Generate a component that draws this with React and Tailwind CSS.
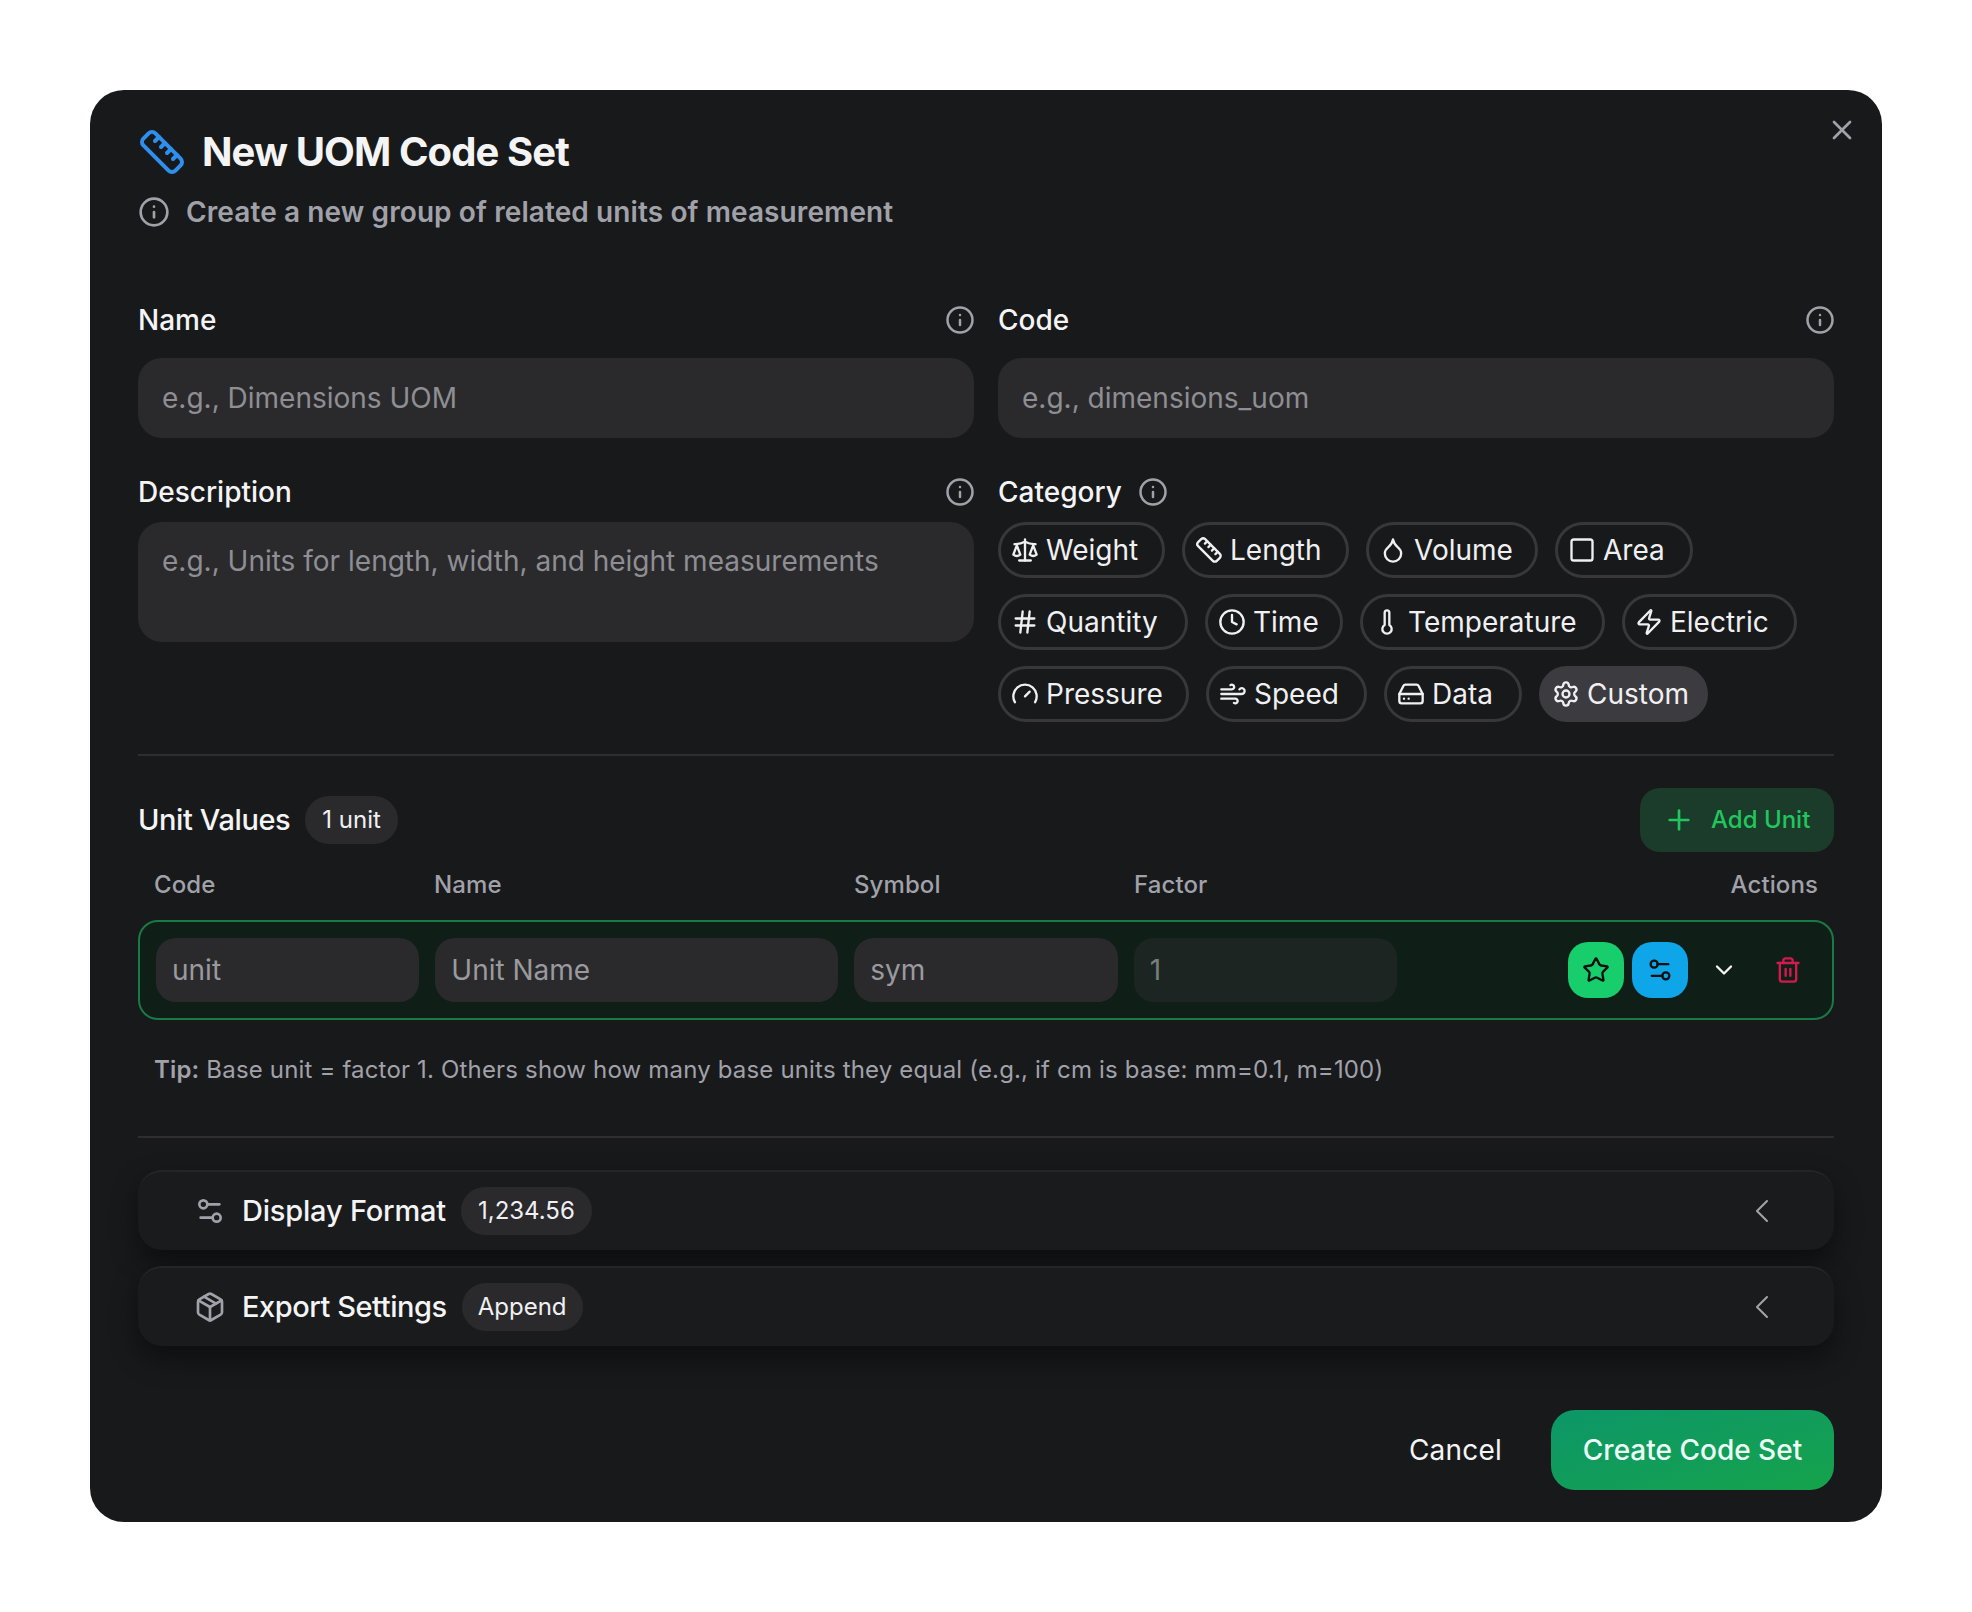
import React from "react";
import { Ruler, Info, X, Scale, Droplet, Square, Hash, Clock, Thermometer, Zap, Gauge, Wind, HardDrive, Settings, Plus, Star, Settings2, ChevronDown, Trash2, Package, ChevronLeft } from "lucide-react";

const rows = [
  [["Weight", Scale, "w-[167px]"], ["Length", Ruler, "w-[167px]"], ["Volume", Droplet, "w-[172px]"], ["Area", Square, "w-[138px]"]],
  [["Quantity", Hash, "w-[190px]"], ["Time", Clock, "w-[138px]"], ["Temperature", Thermometer, "w-[245px]"], ["Electric", Zap, "w-[175px]"]],
  [["Pressure", Gauge, "w-[191px]"], ["Speed", Wind, "w-[161px]"], ["Data", HardDrive, "w-[138px]"], ["Custom", Settings, "w-[169px]", true]],
];

function Chip({ label, Icon, width, active }) {
  return (
    <button className={`flex h-14 items-center gap-[7px] rounded-full border-[3px] pl-[10px] text-[28px] text-[#f0f0f2] ${width} ${active ? "border-[#3c3c40] bg-[#3c3c40]" : "border-[#38383b]"}`}>
      <Icon size={28} strokeWidth={2} />
      <span>{label}</span>
    </button>
  );
}

function Label({ children, spread = true }) {
  return (
    <div className={`flex h-[32px] items-center ${spread ? "justify-between" : "gap-[16px]"}`}>
      <span className="text-[28px] font-[550] text-[#f4f4f5]">{children}</span>
      <Info size={30} strokeWidth={2} className="-mr-px text-[#a1a1aa]" />
    </div>
  );
}

function Field({ placeholder, className = "" }) {
  return (
    <input placeholder={placeholder} className={`h-20 w-full rounded-[24px] bg-[#2a2a2d] px-6 text-[28px] placeholder:text-[#8e8e93] ${className}`} />
  );
}

function RowInput({ placeholder, span, dim }) {
  return (
    <input placeholder={placeholder} className={`h-16 w-full min-w-0 rounded-[20px] px-4 text-[28px] ${span} ${dim ? "bg-[#1c2522] placeholder:text-[#76807b]" : "bg-[#2a2a2d] placeholder:text-[#9a9a9e]"}`} />
  );
}

function Accordion({ Icon, title, badge, titleClass, badgeClass }) {
  return (
    <div className="flex h-20 items-center rounded-[24px] border-t-2 border-[#252527] bg-[#1a1b1d] pl-[56px] pr-[52px] shadow-[0_12px_28px_rgba(0,0,0,0.45)]">
      <Icon size={32} strokeWidth={2} className="text-[#a1a1aa]" />
      <span className={`ml-[16px] text-[29px] font-medium text-[#f4f4f5] ${titleClass}`}>{title}</span>
      <span className={`ml-[15px] flex h-12 items-center rounded-full bg-[#2a2a2d] text-[24px] text-[#f0f0f2] ${badgeClass}`}>{badge}</span>
      <ChevronLeft size={40} strokeWidth={1.25} className="ml-auto text-[#a1a1aa]" />
    </div>
  );
}

export default function App() {
  return (
    <div className="flex min-h-screen items-center justify-center bg-white [font-family:Inter,sans-serif]">
      <div className="relative flex h-[1432px] w-[1792px] flex-col rounded-[34px] bg-[#18191b] px-12 pb-[32px] pt-[36px] text-white">
        <button className="absolute right-[24px] top-[24px] text-[#a1a1aa]"><X size={32} strokeWidth={2} /></button>

        <div className="flex h-[52px] items-center gap-[16px]">
          <Ruler size={48} strokeWidth={2} className="text-[#2f8fee]" />
          <h2 className="text-[40px] font-bold tracking-[-0.9px] text-[#f4f4f5]">New UOM Code Set</h2>
        </div>
        <div className="mt-[16px] flex h-[36px] items-center gap-[16px]">
          <Info size={32} strokeWidth={2} className="text-[#a1a1aa]" />
          <p className="text-[28px] font-semibold tracking-[0.1px] text-[#a1a1aa]">Create a new group of related units of measurement</p>
        </div>

        <div className="mt-[74px] grid grid-cols-2 gap-x-6">
          <div>
            <Label>Name</Label>
            <Field placeholder="e.g., Dimensions UOM" className="mt-[22px]" />
          </div>
          <div>
            <Label>Code</Label>
            <Field placeholder="e.g., dimensions_uom" className="mt-[22px]" />
          </div>
          <div className="mt-[38px]">
            <Label>Description</Label>
            <textarea placeholder="e.g., Units for length, width, and height measurements" className="mt-[14px] block h-[120px] w-full resize-none rounded-[24px] bg-[#2a2a2d] px-6 py-[18px] text-[28px] placeholder:text-[#8e8e93]" />
          </div>
          <div className="mt-[38px]">
            <Label spread={false}>Category</Label>
            <div className="mt-[14px] flex flex-col gap-4">
              {rows.map((row, i) => (
                <div key={i} className="flex gap-[17px]">
                  {row.map(([label, Icon, width, active]) => <Chip key={label} label={label} Icon={Icon} width={width} active={active} />)}
                </div>
              ))}
            </div>
          </div>
        </div>

        <div className="mt-[32px] h-[2px] shrink-0 bg-[#2e2e31]" />

        <div className="mt-[32px] flex h-16 items-center">
          <span className="text-[29px] font-medium tracking-[-0.4px] text-[#f4f4f5]">Unit Values</span>
          <span className="ml-[15px] flex h-12 items-center rounded-full bg-[#2a2a2d] px-[17px] text-[24px] text-[#f0f0f2]">1 unit</span>
          <button className="ml-auto flex h-16 w-[194px] items-center gap-4 rounded-[20px] bg-[#1b3b2b] pl-[23px] text-[24px] font-medium text-[#22c55e]">
            <Plus size={32} strokeWidth={2} />Add Unit
          </button>
        </div>

        <div className="mt-[17px] grid grid-cols-12 gap-4 px-4 text-[24px] font-medium leading-[32px] tracking-[0.1px] text-[#a1a1aa]">
          <span className="col-span-2">Code</span>
          <span className="col-span-3">Name</span>
          <span className="col-span-2">Symbol</span>
          <span className="col-span-2">Factor</span>
          <span className="col-span-3 text-right">Actions</span>
        </div>

        <div className="mt-[19px] grid h-[100px] shrink-0 grid-cols-12 items-center gap-4 rounded-[20px] border-2 border-[#1a7a45] bg-[#0f1f18] px-4">
          <RowInput placeholder="unit" span="col-span-2" />
          <RowInput placeholder="Unit Name" span="col-span-3" />
          <RowInput placeholder="sym" span="col-span-2" />
          <RowInput placeholder="1" span="col-span-2" dim />
          <div className="col-span-3 flex justify-end gap-2">
            <button className="flex size-14 items-center justify-center rounded-[20px] bg-[#18cd6c] text-[#0b0f0d]"><Star size={28} strokeWidth={2} /></button>
            <button className="flex size-14 items-center justify-center rounded-[20px] bg-[#0ea5e9] text-[#0b0f0d]"><Settings2 size={28} strokeWidth={2} /></button>
            <button className="flex size-14 items-center justify-center text-[#f4f4f5]"><ChevronDown size={28} strokeWidth={2} /></button>
            <button className="flex size-14 items-center justify-center text-[#d11a4e]"><Trash2 size={28} strokeWidth={2} /></button>
          </div>
        </div>

        <p className="mt-[32px] pl-4 text-[24px] tracking-[0.17px] text-[#a1a1aa]"><span className="font-semibold">Tip:</span> Base unit = factor 1. Others show how many base units they equal (e.g., if cm is base: mm=0.1, m=100)</p>

        <div className="mt-[48px] h-[2px] shrink-0 bg-[#2e2e31]" />

        <div className="mt-[32px] flex flex-col gap-4">
          <Accordion Icon={Settings2} title="Display Format" badge="1,234.56" titleClass="tracking-[-0.2px]" badgeClass="px-[17px]" />
          <Accordion Icon={Package} title="Export Settings" badge="Append" titleClass="tracking-[-0.45px]" badgeClass="px-4" />
        </div>

        <div className="mt-auto flex items-center justify-end">
          <button className="mr-[49px] text-[28px] tracking-[0.2px] text-[#f4f4f5]">Cancel</button>
          <button className="flex h-20 w-[283px] items-center justify-center rounded-[24px] bg-linear-to-br from-[#0d9668] to-[#16a34a] text-[28px] font-medium text-[#ecfdf5]">Create Code Set</button>
        </div>
      </div>
    </div>
  );
}
